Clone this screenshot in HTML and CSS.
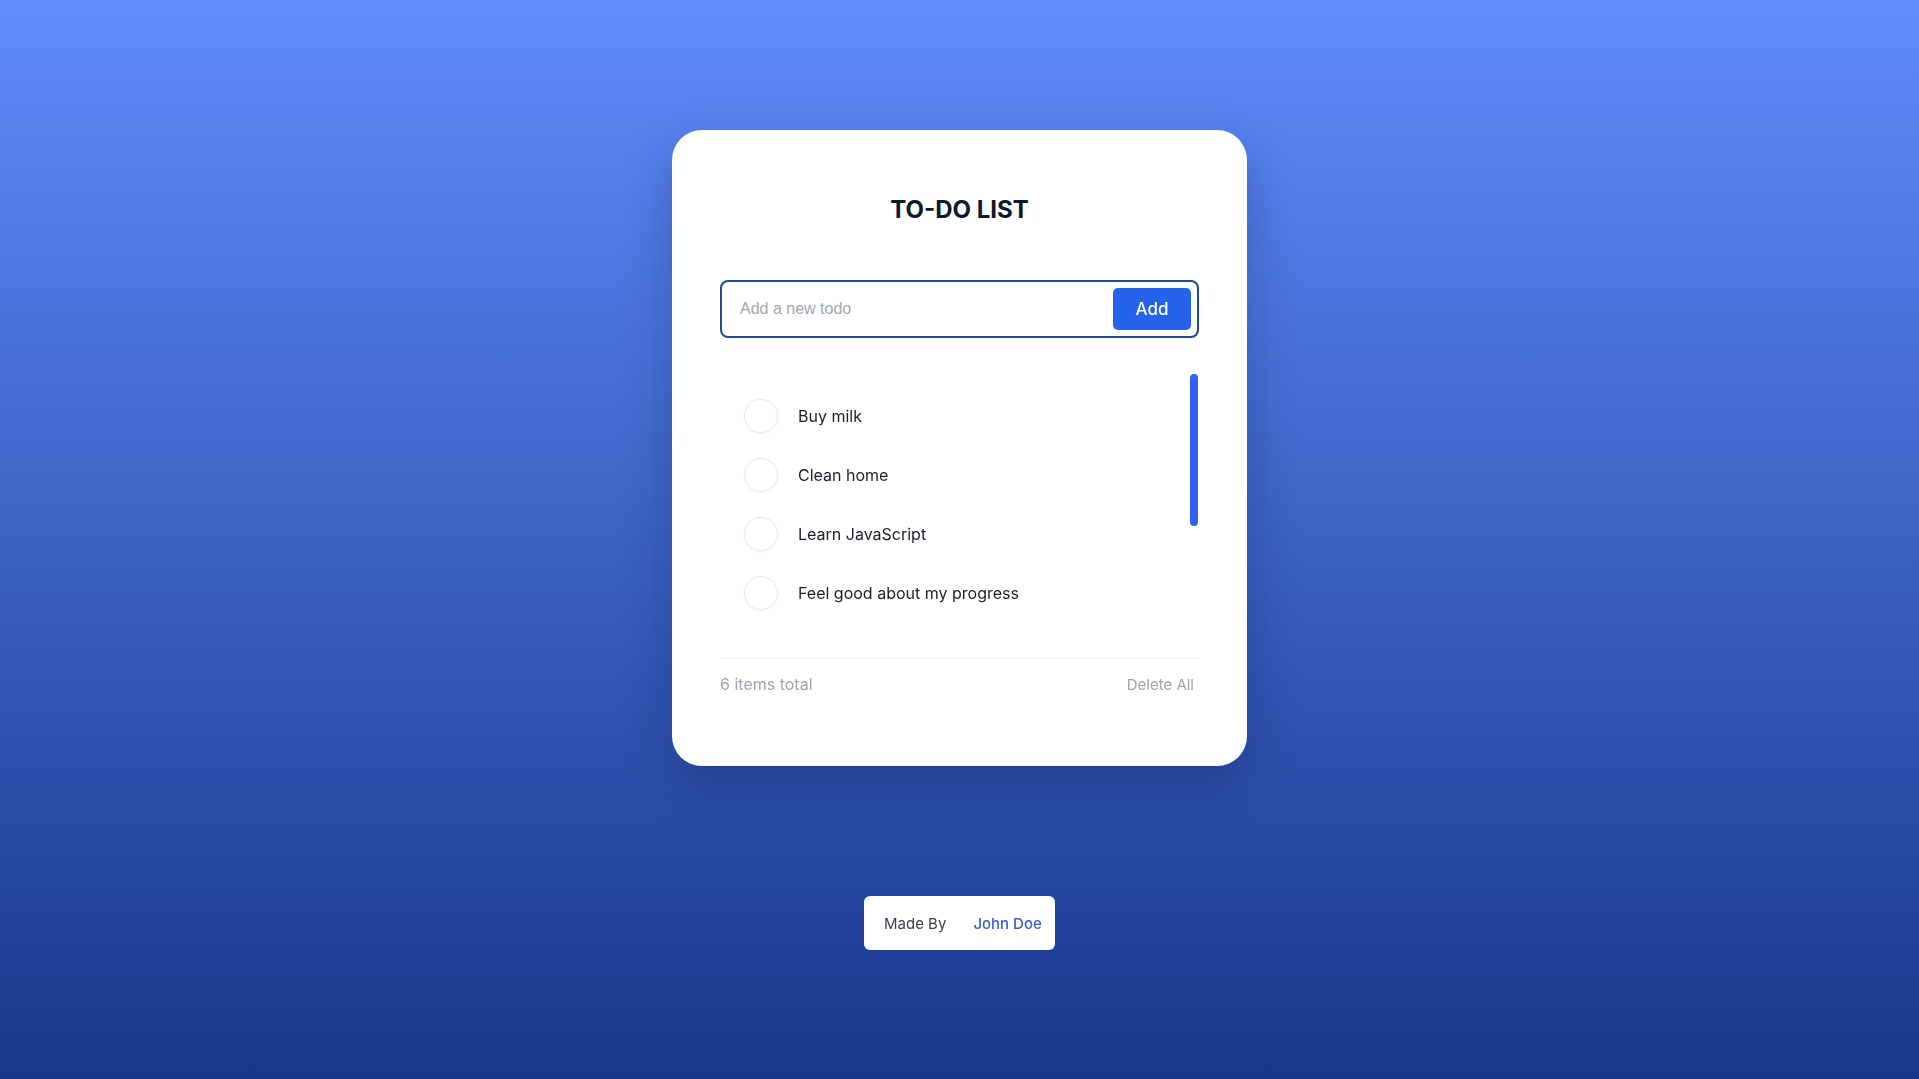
FILE: index.html
```html
<!DOCTYPE html>
<html lang="en">
<head>
<meta charset="utf-8">
<title>To-Do List</title>
<link rel="stylesheet" href="styles.css">
</head>
<body>
  <main class="card">
    <h1 class="title">TO-DO LIST</h1>
    <form class="add-form">
      <input class="add-input" type="text" placeholder="Add a new todo" autofocus>
      <button class="add-btn" type="button">Add</button>
    </form>
    <div class="list-wrap">
      <ul class="todo-list">
        <li class="todo"><span class="check"></span><span class="todo-text">Buy milk</span></li>
        <li class="todo"><span class="check"></span><span class="todo-text">Clean home</span></li>
        <li class="todo"><span class="check"></span><span class="todo-text">Learn JavaScript</span></li>
        <li class="todo"><span class="check"></span><span class="todo-text">Feel good about my progress</span></li>
        <li class="todo"><span class="check"></span><span class="todo-text">Go for a run</span></li>
        <li class="todo"><span class="check"></span><span class="todo-text">Read a book</span></li>
      </ul>
      <div class="scroll-thumb"></div>
    </div>
    <div class="footer">
      <span class="count">6 items total</span>
      <button class="delete-all" type="button">Delete All</button>
    </div>
  </main>
  <div class="credit">
    <span class="credit-label">Made By</span>
    <span class="credit-name">John Doe</span>
  </div>
</body>
</html>
```
FILE: styles.css
```css
* { box-sizing: border-box; }

html, body { height: 100%; }

body {
  margin: 0;
  min-height: 1079px;
  background: linear-gradient(180deg, #5f8dfc 0%, #3c62c3 50%, #18368a 100%);
  font-family: Inter, "Noto Sans", sans-serif;
  display: flex;
  flex-direction: column;
  align-items: center;
  padding-top: 130px;
  overflow: hidden;
}

.card {
  width: 575px;
  background: #ffffff;
  border-radius: 30px;
  padding: 64px 48px 70px;
  box-shadow: 0 18px 50px rgba(10, 25, 70, 0.28);
}

.title {
  margin: 0 0 54px;
  text-align: center;
  font-size: 24px;
  line-height: 32px;
  font-weight: 700;
  color: #0f172a;
}

.add-form {
  display: flex;
  align-items: center;
  height: 58px;
  border: 2px solid #1f4c8f;
  border-radius: 8px;
  padding: 6px;
  margin: 0;
}

.add-input {
  flex: 1;
  border: none;
  outline: none;
  height: 42px;
  padding: 0 0 0 12px;
  font-family: "Liberation Sans", Arial, sans-serif;
  font-size: 16px;
  color: #111827;
  background: transparent;
  caret-color: #000;
}

.add-input::placeholder { color: #a3a6ad; }

.add-btn {
  width: 78px;
  height: 42px;
  border: none;
  border-radius: 5px;
  background: #2563eb;
  color: #ffffff;
  font-family: Inter, sans-serif;
  font-size: 17px;
  font-weight: 500;
  cursor: pointer;
}

.list-wrap {
  position: relative;
  margin-top: 36px;
}

.todo-list {
  list-style: none;
  margin: 0;
  padding: 12px 10px 0 0;
  height: 248px;
  overflow: hidden;
}

.scroll-thumb {
  position: absolute;
  top: 0;
  right: 1px;
  width: 8px;
  height: 152px;
  border-radius: 4px;
  background: #2f62f2;
}

.todo {
  display: flex;
  align-items: center;
  height: 59px;
  padding-left: 24px;
  gap: 20px;
}

.check {
  width: 34px;
  height: 34px;
  border-radius: 50%;
  border: 1px solid #e6e7ea;
  box-shadow: 0 1px 3px rgba(0, 0, 0, 0.05);
  flex-shrink: 0;
}

.todo-text {
  font-size: 16px;
  color: #1a1f2c;
}

.footer {
  margin-top: 36px;
  border-top: 1px solid #eceef1;
  padding-top: 13px;
  display: flex;
  justify-content: space-between;
  align-items: center;
  line-height: 24px;
}

.count {
  font-size: 16px;
  color: #a0a4ad;
}

.delete-all {
  border: none;
  background: none;
  padding: 0 5px 0 0;
  font-family: Inter, sans-serif;
  font-size: 15px;
  color: #a0a4ad;
  cursor: pointer;
}

.credit {
  margin-top: 130px;
  width: 191px;
  height: 54px;
  background: #ffffff;
  border-radius: 6px;
  display: flex;
  align-items: center;
  padding-left: 20px;
  gap: 27px;
  font-size: 15px;
}

.credit-label { color: #374151; }

.credit-name { color: #3b5ec6; font-weight: 500; }
```
